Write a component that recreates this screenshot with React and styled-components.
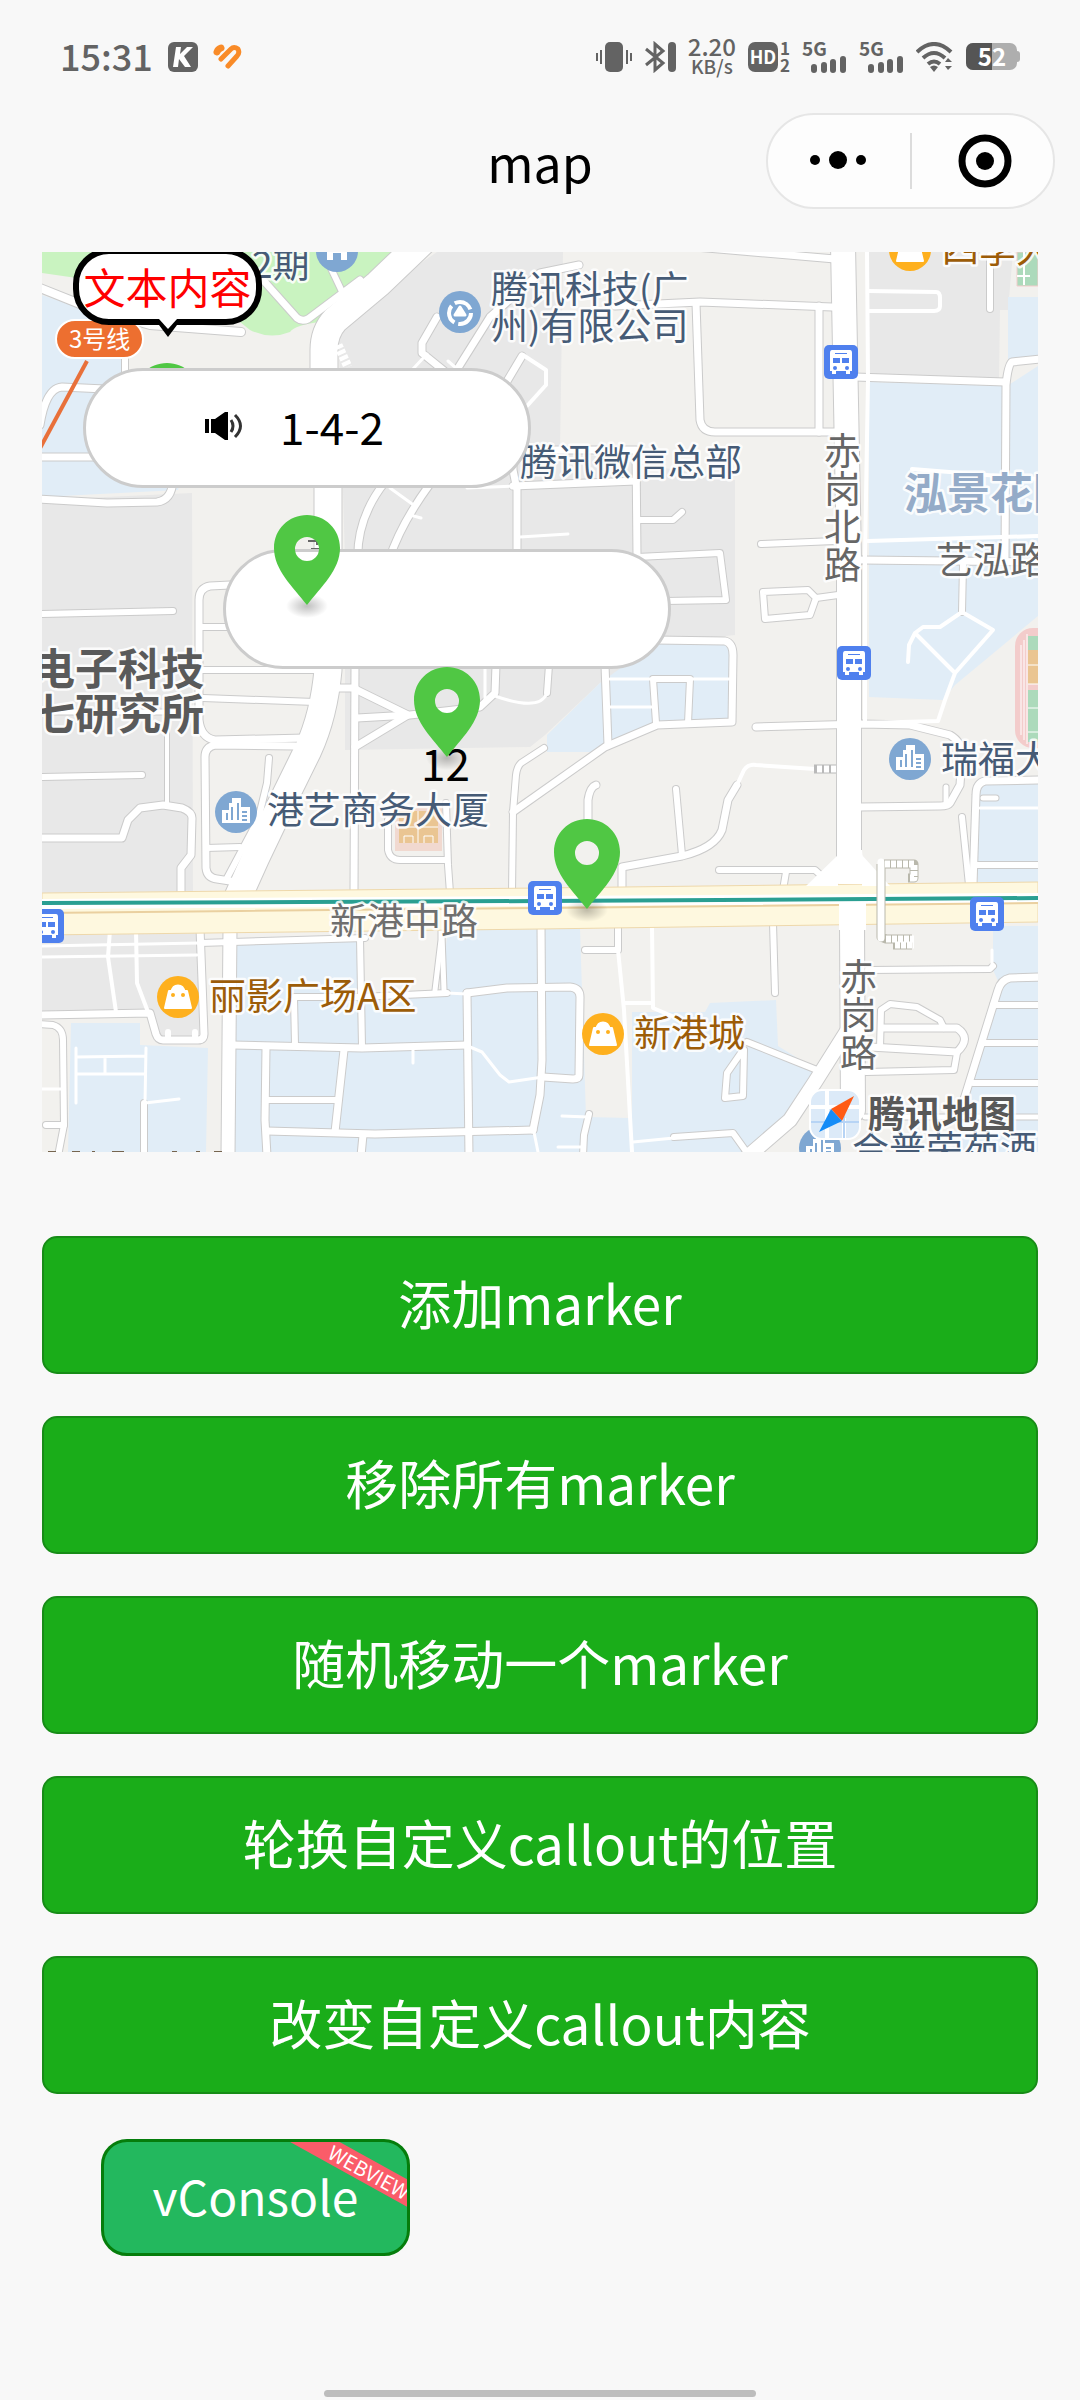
import * as React from 'react';
import styled, { createGlobalStyle } from 'styled-components';

const GlobalStyle = createGlobalStyle`
  * {
    box-sizing: border-box;
  }
  body {
    margin: 0;
    background: #f8f8f8;
    font-family: "Noto Sans CJK SC", "Noto Sans", sans-serif;
  }
  button {
    font-family: inherit;
  }
`;

const LAND = {
  park: '#c9f3c0',
  block: '#e8e8e8',
  estate: '#e1edf7',
};

// filled blocks under the roads
const areas = [
  [LAND.park, 'M42 252H402L330 310L320 322Q295 325 290 332Q270 340 250 330L225 310L160 290L42 273Z'],
  [LAND.block, 'M437 252H563L560 450L735 480V635L660 643L600 683L545 735L530 747L345 750V560L338 320Z'],
  [LAND.block, 'M42 500L192 493L193 895H42Z'],
  [LAND.block, 'M42 933H200L204 1040H156L150 1012H42Z'],
  [LAND.block, 'M868 252H1013L1008 310H1000L999 378H868Z'],
  [LAND.estate, 'M42 295L120 322L127 370L205 400L178 490L42 497Z'],
  [LAND.estate, 'M1008 297H1038V362H1008Z'],
  [LAND.estate, 'M869 382L1007 386L1038 366V616L955 685L943 700L869 697Z'],
  [LAND.estate, 'M655 643H733V722L657 725L600 752H547V735L600 683Z'],
  [LAND.estate, 'M978 783H1038V882H978Z'],
  [LAND.estate, 'M237 942L358 938L362 994L440 990L448 930L580 928L586 1117L630 1118L632 1152H230Z'],
  [LAND.estate, 'M632 1012H705L710 1003L776 1000L778 1046L820 1072L815 1090L790 1125L750 1152H632Z'],
  [LAND.estate, 'M71 1023H140V1045L208 1048L206 1152H68Z'],
  [LAND.estate, 'M993 926H1038V1152H950L1000 985L993 970Z'],
];

// [width, path] of the roads that have an outline
const roads = [
  [8, 'M40 288L90 308L150 325L241 332'],
  [7, 'M263 280L297 318Q302 322 308 319L360 280'],
  [6, 'M328 262L346 300'],
  [6, 'M125 350V385'],
  [7, 'M40 425Q46 388 62 387L105 389'],
  [7, 'M38 457H100'],
  [7, 'M38 499L107 503L157 502Q172 500 173 480'],
  [7, 'M385 482Q355 520 358 565'],
  [7, 'M430 484Q400 525 389 560'],
  [7, 'M579 265L540 273L490 317L458 368'],
  [7, 'M437 317L422 343V353L448 374'],
  [7, 'M522 356L503 388'],
  [7, 'M513 486L636 481'],
  [7, 'M517 555V490L513 470V450H636L637 555'],
  [6, 'M637 520H673L682 512'],
  [6, 'M637 557L720 553L726 600L665 601'],
  [7, 'M615 306L700 302L832 307'],
  [7, 'M696 303L700 420Q702 432 715 432H835'],
  [7, 'M695 247L835 259'],
  [7, 'M819 306V432'],
  [6, 'M990 255V309'],
  [7, 'M855 377L1005 382'],
  [7, 'M1040 359L1012 362Q1008 364 1006 385L1005 560'],
  [6, 'M761 544L835 541'],
  [7, 'M862 560L1040 562'],
  [6, 'M763 592L808 590L816 598L810 615L765 619Z'],
  [6, 'M816 598L838 595'],
  [7, 'M655 640L725 641Q733 643 733 655L732 722L657 725L605 747L513 812'],
  [6, 'M656 723L653 679H690L688 723'],
  [7, 'M605 665L608 745'],
  [7, 'M496 665L495 693L480 707L410 715L357 718'],
  [6, 'M549 665L547 693'],
  [7, 'M355 689L408 715L355 747'],
  [7, 'M355 665L354 893'],
  [7, 'M335 688H355'],
  [6, 'M544 748L521 763Q517 767 516 775L513 812L512 893'],
  [7, 'M596 785Q590 787 588 800V830'],
  [6, 'M676 789L682 855'],
  [7, 'M622 893V867L682 856Q715 848 722 830L728 800L737 785'],
  [6, 'M388 820V850Q390 860 400 860H446'],
  [6, 'M446 803L448 865L450 893'],
  [6, 'M38 614L173 611'],
  [7, 'M230 585L210 586Q199 588 199 600V720Q201 738 215 740L305 738'],
  [6, 'M199 627H232'],
  [6, 'M201 670H315'],
  [6, 'M203 698L315 702'],
  [7, 'M295 746L215 745Q205 747 205 757L206 868Q207 878 217 879L230 881'],
  [6, 'M269 758L267 783L258 820L226 880'],
  [6, 'M206 848L240 847'],
  [4, 'M167 730V804'],
  [5, 'M40 712H198'],
  [6, 'M38 777L142 775'],
  [7, 'M38 838H122L128 820L140 808L163 805L182 808Q192 812 192 818L191 855L181 868V895'],
  [6, 'M200 943L365 938'],
  [7, 'M38 1015L150 1013L156 1034Q158 1040 163 1040H198Q204 1040 204 1034L200 928'],
  [13, 'M230 928L228 1156'],
  [6, 'M38 1024L53 1025Q63 1028 63 1040L64 1125L58 1156'],
  [6, 'M46 1125H64'],
  [6, 'M144 1103V1156'],
  [6, 'M360 938L362 1047'],
  [7, 'M233 1045L362 1048L467 1045'],
  [6, 'M296 997H360L447 993'],
  [6, 'M294 997L295 1045'],
  [7, 'M266 1048L265 1120L267 1156'],
  [6, 'M267 1100H337'],
  [7, 'M344 1050L335 1132'],
  [7, 'M267 1131L375 1134L533 1130'],
  [7, 'M363 1135L361 1156'],
  [5, 'M441 925V940L435 990'],
  [5, 'M442 935L444 990'],
  [7, 'M467 993L507 988L570 987Q580 988 580 997L579 1075Q579 1079 573 1079L543 1077'],
  [7, 'M467 993L469 1156'],
  [7, 'M541 925L542 1060L540 1095L533 1130'],
  [6, 'M585 950H618V925'],
  [6, 'M589 1114L584 1135L583 1156'],
  [6, 'M674 1137L733 1133L748 1154'],
  [14, 'M849 1028L815 1082L790 1120L746 1158'],
  [6, 'M747 1042L817 1070'],
  [6, 'M743 1050L727 1073L725 1098L743 1096L744 1050'],
  [6, 'M773 923L775 993'],
  [6, 'M719 870H815L826 880'],
  [6, 'M786 872L783 890'],
  [6, 'M868 970L990 969L993 966'],
  [6, 'M880 1048L881 1010L890 1004L917 1007L940 1020L944 1028'],
  [7, 'M883 1028H957Q972 1038 957 1052L870 1047'],
  [6, 'M957 1053L954 1070L866 1072'],
  [7, 'M1042 977L1010 978Q1001 980 998 990L960 1112'],
  [6, 'M993 1005H1042'],
  [6, 'M983 1043H1042'],
  [6, 'M973 1083H1042'],
  [5, 'M865 1117H1042'],
  [7, 'M756 727L862 724L910 725L950 735Q962 742 962 755L960 785L950 803Q948 806 940 806L860 807'],
  [5, 'M946 787V805'],
  [6, 'M963 565L962 612'],
  [7, 'M1042 780L985 781Q976 783 976 795L973 885'],
  [6, 'M962 817L969 885'],
  [5, 'M983 798H996'],
  [6, 'M977 865H1042'],
];

const bigRoads = [
  [27, 'M424 240L378 284L335 320Q324 332 324 350V368L328 488V670Q324 715 308 750L276 815L256 857L238 897'],
  [24, 'M843 245L849 560V880L852 925L853 1110'],
];

// footpaths, no outline
const paths = [
  [4, 'M867 250L868 380L865 557V722'],
  [4, 'M868 291L936 292Q940 292 940 298V306Q940 311 934 311H868'],
  [4, 'M523 355L546 370V385L527 406'],
  [3, 'M467 488L513 486M520 537L568 534M390 488L415 506L410 515L421 518M448 361L456 368M427 354L412 370'],
  [4, 'M912 469L1038 479M868 541L1038 536'],
  [3, 'M610 679H733M610 707H653M485 665V700M495 696Q540 712 547 693'],
  [4, 'M737 785L744 770Q748 764 756 765L815 769'],
  [3, 'M42 946L200 943M42 957L197 955'],
  [4, 'M110 930L108 957L116 1012M136 930L137 983L148 1012'],
  [6, 'M168 1032V1040M195 1032V1040'],
  [3, 'M42 1089H62M76 1048V1103M76 1057L145 1056M76 1074H145M105 1057V1074M146 1048L145 1103L179 1099'],
  [3, 'M447 993L467 994M470 1047L482 1052L500 1075L509 1082L543 1077M413 1050V1063M534 1132L538 1152'],
  [4, 'M618 950L624 1010L632 1152M652 926L653 1008L672 1016M625 1003H653'],
  [3, 'M562 1116L588 1117M558 1147H583M633 1142L674 1138'],
  [4, 'M865 723L938 721L945 700L955 673L993 630L962 612L940 627H923L915 633L909 645L908 662M915 633L955 673'],
  [3, 'M980 808H1038M992 950V968'],
];

const labels = [
  { x: 252, y: 278, t: '2期' },
  { x: 491, y: 303, t: '腾讯科技(广' },
  { x: 491, y: 340, t: '州)有限公司' },
  { x: 520, y: 476, t: '腾讯微信总部' },
  { x: 267, y: 824, t: '港艺商务大厦' },
  { x: 941, y: 773, t: '瑞福大' },
  { x: 852, y: 1163, t: '合普荣苑酒' },
  { x: 942, y: 263, t: '四季大', c: '#9c5c08' },
  { x: 209, y: 1010, t: '丽影广场A区', c: '#9c5c08' },
  { x: 634, y: 1047, t: '新港城', c: '#9c5c08' },
  { x: 330, y: 935, t: '新港中路', c: '#6f6f6f' },
  { x: 936, y: 574, t: '艺泓路', c: '#666' },
  { x: 32, y: 685, t: '电子科技', c: '#5a5a5a', s: 43, w: 700 },
  { x: 32, y: 730, t: '七研究所', c: '#5a5a5a', s: 43, w: 700 },
  { x: 904, y: 509, t: '泓景花园', c: '#94abc8', s: 43, w: 700 },
];

const streets = [
  { x: 824, y: 465, step: 38, t: '赤岗北路' },
  { x: 840, y: 991, step: 38, t: '赤岗路' },
];

const stations = [[841, 362], [854, 663], [545, 898], [987, 914], [47, 926]];

const pins = [
  { id: 1, left: 92, top: 111 },
  { id: 2, left: 232, top: 263 },
  { id: 3, left: 372, top: 415 },
  { id: 4, left: 512, top: 567 },
];

const Station = ({ x, y }) => (
  <g transform={`translate(${x - 17} ${y - 17})`}>
    <rect width="34" height="34" rx="5" fill="#4f80ee" />
    <path d="M8 5H26Q28 5 28 8V26H26V29H22V26H12V29H8V26H6V8Q6 5 8 5Z" fill="#fff" />
    <path d="M11 8H23V9H11ZM9 13H16V18H9ZM18 13H25V18H18Z" fill="#4f80ee" />
    <circle cx="11" cy="23" r="2" fill="#4f80ee" />
    <circle cx="23" cy="23" r="2" fill="#4f80ee" />
  </g>
);

const Shop = ({ x, y }) => (
  <g transform={`translate(${x} ${y})`}>
    <circle r="21" fill="#feb01e" />
    <path d="M-9 -6H9L13 11H-13Z" fill="#fff" stroke="#fff" strokeWidth="2" strokeLinejoin="round" />
    <path d="M-6 -5Q-5 -11 0 -11Q5 -11 6 -5" fill="#fff" stroke="#fff" strokeWidth="3" />
    <circle cx="-5" cy="-2" r="2" fill="#feb01e" />
    <circle cx="5" cy="-2" r="2" fill="#feb01e" />
  </g>
);

const Building = ({ x, y }) => (
  <g transform={`translate(${x} ${y})`}>
    <circle r="21" fill="#7fa7d2" />
    <path d="M-14 11V-2H-7V-9H-4V-14H5V-5H14V11Z" fill="#fff" />
    <path d="M-9 1V8M-4 -5V8M2 -9V8M6 0H11M6 4H11M6 8H11" stroke="#7fa7d2" strokeWidth="2" />
  </g>
);

const Halo = ({ x, y, t, c = '#465b76', s = 37, w = 400 }) => (
  <text
    x={x}
    y={y}
    fill={c}
    fontSize={s}
    fontWeight={w}
    stroke="#fff"
    strokeOpacity="0.85"
    strokeWidth="5"
    strokeLinejoin="round"
    paintOrder="stroke">
    {t}
  </text>
);

const CityMap = () => (
  <Canvas viewBox="42 252 996 900" preserveAspectRatio="xMinYMin slice">
    <rect x="42" y="252" width="996" height="900" fill="#f2f1ee" />
    {areas.map(([c, d]) => <path key={d} d={d} fill={c} />)}

    <rect x="395" y="807" width="47" height="44" fill="#f1d9d0" />
    <path d="M399 811H438V843H399Z" fill="#eac592" />
    <path d="M418 811V843M399 827H438M404 843V836H413V843M424 843V836H433V843" fill="none" stroke="#fff" />
    <rect x="1015" y="628" width="60" height="120" rx="18" fill="#f3cccb" />
    <path d="M1028 636H1040V650H1028ZM1028 690H1040V742H1028Z" fill="#acdabb" />
    <path d="M1028 650H1040V684H1028Z" fill="#eac592" />
    <path d="M1021 645V735M1024 640V740M1027 634V744M1028 665H1038M1028 684H1038M1028 708H1038M1028 732H1038" stroke="#fff" />
    <path d="M1017 252H1038V286H1017Z" fill="#acdabb" stroke="#f3cccb" />
    <path d="M1024 252V285M1017 264H1024M1017 276H1030" stroke="#fff" strokeWidth="2" />

    <g fill="none" strokeLinecap="round" strokeLinejoin="round">
      {bigRoads.map(([w, d]) => <path key={d} d={d} stroke="#cbcbcb" strokeWidth={w + 2} />)}
      {roads.map(([w, d]) => <path key={d} d={d} stroke="#cbcbcb" strokeWidth={w + 2} />)}
      {roads.map(([w, d]) => <path key={d} d={d} stroke="#fff" strokeWidth={w} />)}
      {paths.map(([w, d]) => <path key={d} d={d} stroke="#fff" strokeWidth={w} />)}
      {bigRoads.map(([w, d]) => <path key={d} d={d} stroke="#fff" strokeWidth={w} />)}
    </g>
    <path d="M338 345L348 367" stroke="#fff" strokeWidth="9" strokeDasharray="4 2" />
    <path d="M308 541H317V545M311 549H319" fill="none" stroke="#666" strokeWidth="2" />
    <path d="M814 769H836" stroke="#b9b9b9" strokeWidth="9" />
    <path d="M817 769H836" stroke="#fff" strokeWidth="7" strokeDasharray="5 2" />

    {/* main street with the metro line */}
    <path d="M42 893L540 888L1038 882V922L540 929L42 935Z" fill="#fef8df" stroke="#eed8ab" />
    <path d="M42 904L540 901L1038 898" stroke="#fff" strokeWidth="10" />
    <path d="M42 913L240 911L540 908L1038 903" fill="none" stroke="#ead0a0" strokeWidth="2" />
    <path d="M839 884H865L862 850H837ZM839 900H866V930H839Z" fill="#fff" />
    <path d="M862 855L890 886H862ZM838 855L806 886H838Z" fill="#fff" />
    <path d="M42 903L540 901L1038 898" fill="none" stroke="#2a9f92" strokeWidth="4" />
    <g fill="none" strokeLinejoin="round">
      <path d="M884 864H914V878H908" stroke="#b9b8ac" strokeWidth="9" />
      <path d="M881 864V937L886 939H912M893 945H912" stroke="#b9b8ac" strokeWidth="9" />
      <path d="M881 862V938" stroke="#fff" strokeWidth="7" strokeLinecap="round" />
      <path d="M885 864H914V878H909M886 939H914M895 945H914" stroke="#fff" strokeWidth="7" strokeDasharray="5 1" />
    </g>

    <path d="M87 361L38 452" stroke="#e8703a" strokeWidth="4" />
    <rect x="56" y="320" width="87" height="38" rx="19" fill="#ed6f30" stroke="#fff" strokeWidth="2" />
    <text x="69" y="348" fontSize="24" fill="#fff">3号线</text>

    {stations.map(([x, y]) => <Station key={x} x={x} y={y} />)}
    <Shop x={910} y={250} />
    <Shop x={178} y={997} />
    <Shop x={603} y={1034} />
    <Building x={236} y={812} />
    <Building x={910} y={759} />
    <Building x={820} y={1148} />
    <circle cx="337" cy="251" r="21" fill="#7fa7d2" />
    <path d="M327 246H347V260H341V253H333V260H327Z" fill="#fff" />
    <circle cx="460" cy="312" r="21" fill="#7fa7d2" />
    <circle cx="460" cy="313" r="11" fill="none" stroke="#fff" strokeWidth="4" strokeDasharray="19 4" />
    <path d="M460 307L465 315H455Z" fill="#fff" stroke="#fff" strokeWidth="3" strokeLinejoin="round" />

    {labels.map((l) => <Halo key={l.t} {...l} />)}
    {streets.map(({ x, y, step, t }) =>
      [...t].map((ch, i) => <Halo key={t + ch} x={x} y={y + i * step} t={ch} c="#666" />)
    )}
    <path d="M48 1152H56M72 1152H80M92 1152H95M112 1152H124M172 1152H177M196 1152H200M214 1152H222" stroke="#76654f" strokeWidth="2" />

    {/* map brand */}
    <rect x="810" y="1090" width="50" height="49" rx="12" fill="#dceaf8" stroke="#fff" strokeWidth="2" />
    <path d="M827 1091V1138M811 1107H859M844 1118V1138" stroke="#fff" strokeWidth="4" />
    <path d="M811 1122H859M844 1106V1138" stroke="#b7d4f5" strokeWidth="2" />
    <path d="M854 1096L831 1109L842 1121Z" fill="#ff5a14" />
    <path d="M819 1132L831 1109L842 1121Z" fill="#158cf7" />
    <Halo x={868} y={1128} t="腾讯地图" c="#585858" w={700} />
  </Canvas>
);

const Pin = ({ left, top, id }) => (
  <PinIcon $left={left} $top={top} viewBox="0 0 66 104" role="img" aria-label={`marker ${id}`}>
    <defs>
      <radialGradient id={`shade${id}`}>
        <stop offset="0" stopColor="#000" stopOpacity="0.25" />
        <stop offset="1" stopColor="#000" stopOpacity="0" />
      </radialGradient>
    </defs>
    <ellipse cx="33" cy="91" rx="21" ry="12" fill={`url(#shade${id})`} />
    <path
      fillRule="evenodd"
      fill="#50c744"
      d="M33 0C51 0 66 14 66 33C66 55 47 72 33 90C19 72 0 55 0 33C0 14 15 0 33 0ZM33 22A12 12 0 1 0 33 46A12 12 0 1 0 33 22Z"
    />
  </PinIcon>
);

const Signal = () => (
  <SignalBox>
    <svg width="45" height="32" viewBox="0 0 45 32">
      <path d="M12 26V29M22 24V29M31 21V29M41 18V29" stroke="#636363" strokeWidth="6" strokeLinecap="round" />
    </svg>
    <NetType>5G</NetType>
  </SignalBox>
);

const StatusBar = () => (
  <Status>
    <Group $gap={15}>
      <Clock>15:31</Clock>
      <svg width="30" height="30" viewBox="0 0 30 30">
        <rect width="30" height="30" rx="6" fill="#636363" />
        <path d="M8 5H13L12 12L19 5H25L16 14L23 25H17L11 17L10 25H5Z" fill="#fff" />
      </svg>
      <svg width="29" height="26" viewBox="0 0 29 26">
        <g fill="none" stroke="#f98b28" strokeLinecap="round" strokeLinejoin="round">
          <path d="M4 8Q5 5 8 4" strokeWidth="7" />
          <path d="M8 15L18 5Q21 2 25 5Q27 9 24 12L15 22" strokeWidth="5" />
        </g>
      </svg>
    </Group>
    <Group $gap={12}>
      <svg width="36" height="32" viewBox="0 0 36 32">
        <rect x="9" y="1" width="18" height="30" rx="5" fill="#636363" />
        <path d="M1 12V20M5 9V23M31 9V23M35 12V20" stroke="#636363" strokeWidth="2" />
      </svg>
      <svg width="32" height="32" viewBox="0 0 32 32">
        <path d="M2 8L19 22L11 29V3L19 10L2 24" fill="none" stroke="#636363" strokeWidth="3" />
        <rect x="24" y="1" width="8" height="30" rx="4" fill="#636363" />
      </svg>
      <Speed>
        <SpeedValue>2.20</SpeedValue>
        <span>KB/s</span>
      </Speed>
      <Group $gap={2}>
        <HD>HD</HD>
        <Sims>
          <span>1</span>
          <span>2</span>
        </Sims>
      </Group>
      <Signal />
      <Signal />
      <svg width="38" height="30" viewBox="0 0 38 30">
        <path d="M1 10Q18 -6 35 10M7 16Q18 6 29 16M12 22Q18 17 24 22" fill="none" stroke="#636363" strokeWidth="4" />
        <path d="M14 25Q18 22 22 25L18 30ZM29 20L32 16L36 20ZM29 24H36L32 28Z" fill="#636363" />
      </svg>
      <Battery>
        <BatteryLevel>5</BatteryLevel>
        <span>2</span>
      </Battery>
    </Group>
  </Status>
);

const actions = [
  '添加marker',
  '移除所有marker',
  '随机移动一个marker',
  '轮换自定义callout的位置',
  '改变自定义callout内容',
];

export default function App() {
  return (
    <Page>
      <GlobalStyle />
      <StatusBar />
      <NavBar>
        <Title>map</Title>
        <Capsule>
          <CapsuleButton aria-label="more">
            <svg width="60" height="56" viewBox="0 0 60 56">
              <circle cx="6" cy="27" r="5" />
              <circle cx="29" cy="27" r="9" />
              <circle cx="52" cy="27" r="5" />
            </svg>
          </CapsuleButton>
          <Divider />
          <CapsuleButton aria-label="close">
            <svg width="60" height="56" viewBox="0 0 60 56">
              <circle cx="33" cy="28" r="23" fill="none" stroke="#000" strokeWidth="7" />
              <circle cx="33" cy="28" r="9" />
            </svg>
          </CapsuleButton>
        </Capsule>
      </NavBar>
      <Content>
        <MapBox>
          <CityMap />
          <Pin {...pins[0]} />
          <TextCallout>
            文本内容
            <Arrow viewBox="0 0 26 20">
              <path d="M0 0V6H4L13 18L22 6H26V0Z" />
              <path d="M4 0L13 10L22 0Z" fill="#fff" />
            </Arrow>
          </TextCallout>
          <Callout $left={41} $top={116}>
            <svg width="40" height="30" viewBox="0 0 40 30">
              <path d="M1 8H5V22H1ZM7 8H11L21 1H24V29H21L11 22H7Z" />
              <path d="M27 9Q31 15 27 21M31 4Q42 15 31 26" fill="none" stroke="#333" strokeWidth="3" />
            </svg>
            <span>1-4-2</span>
          </Callout>
          <Callout $left={181} $top={297} />
          <MarkerLabel>12</MarkerLabel>
          {pins.slice(1).map((p) => <Pin key={p.id} {...p} />)}
        </MapBox>
        <Actions>
          {actions.map((a) => <ActionButton key={a}>{a}</ActionButton>)}
        </Actions>
        <ConsoleButton>
          vConsole
          <Ribbon>WEBVIEW</Ribbon>
        </ConsoleButton>
      </Content>
      <HomeBar />
    </Page>
  );
}

const Page = styled.div`
  min-height: 100vh;
  display: flex;
  flex-direction: column;
  background: #f8f8f8;
`;

const Status = styled.header`
  height: 113px;
  padding: 0 60px;
  display: flex;
  align-items: center;
  justify-content: space-between;
  color: #636363;
`;

const Group = styled.div`
  display: flex;
  align-items: center;
  gap: ${(p) => p.$gap}px;
`;

const Clock = styled.span`
  padding-bottom: 4px;
  font-size: 36px;
  line-height: 40px;
  font-weight: 500;
`;

const Speed = styled.div`
  display: flex;
  flex-direction: column;
  align-items: center;
  padding-bottom: 2px;
  font-size: 19px;
  line-height: 20px;
  font-weight: 500;
`;

const SpeedValue = styled.span`
  font-size: 24px;
`;

const HD = styled.span`
  width: 30px;
  height: 30px;
  border-radius: 7px;
  background: #636363;
  color: #fff;
  font-size: 18px;
  line-height: 28px;
  font-weight: 700;
  text-align: center;
`;

const Sims = styled.span`
  display: flex;
  flex-direction: column;
  padding-bottom: 2px;
  font-size: 17px;
  line-height: 17px;
  font-weight: 700;
`;

const SignalBox = styled.span`
  position: relative;
  display: flex;
`;

const NetType = styled.span`
  position: absolute;
  left: 0;
  top: -2px;
  font-size: 19px;
  line-height: 18px;
  font-weight: 700;
`;

const Battery = styled.span`
  position: relative;
  display: flex;
  width: 51px;
  height: 27px;
  margin-right: 3px;
  border-radius: 7px;
  background: #aeaeae;
  color: #fff;
  font-size: 24px;
  line-height: 26px;
  font-weight: 700;

  &::after {
    content: '';
    position: absolute;
    right: -3px;
    top: 8px;
    width: 3px;
    height: 11px;
    border-radius: 0 3px 3px 0;
    background: #aeaeae;
  }
`;

const BatteryLevel = styled.span`
  width: 26px;
  border-radius: 7px 0 0 7px;
  background: #555;
  text-align: right;
`;

const NavBar = styled.nav`
  display: grid;
  grid-template-columns: 1fr auto 1fr;
  align-items: center;
  padding: 0 25px;
`;

const Title = styled.h1`
  grid-column: 2;
  margin: 0;
  font-size: 50px;
  line-height: 96px;
  font-weight: 400;
`;

const Capsule = styled.div`
  justify-self: end;
  display: flex;
  align-items: center;
  width: 289px;
  height: 96px;
  border: 2px solid #e6e6e6;
  border-radius: 48px;
  background: #fdfdfd;
`;

const CapsuleButton = styled.button`
  flex: 1;
  display: flex;
  justify-content: center;
  padding: 0;
  border: none;
  background: none;
`;

const Divider = styled.span`
  width: 2px;
  height: 56px;
  background: #dcdcdc;
`;

const Content = styled.main`
  display: flex;
  flex-direction: column;
  padding: 43px 42px 0;
`;

const MapBox = styled.section`
  position: relative;
  height: 900px;
  overflow: hidden;
`;

const Canvas = styled.svg`
  display: block;
  width: 100%;
  height: 100%;
`;

const PinIcon = styled.svg`
  position: absolute;
  left: ${(p) => p.$left}px;
  top: ${(p) => p.$top}px;
  width: 66px;
  height: 104px;
`;

const Callout = styled.div`
  position: absolute;
  left: ${(p) => p.$left}px;
  top: ${(p) => p.$top}px;
  width: 448px;
  height: 120px;
  padding: 0 26px 4px 0;
  display: flex;
  align-items: center;
  justify-content: center;
  gap: 36px;
  border: 3px solid #ccc;
  border-radius: 60px;
  background: #fff;
  font-size: 44px;
  line-height: 60px;
`;

const TextCallout = styled.div`
  position: absolute;
  left: 31px;
  top: -4px;
  width: 189px;
  height: 77px;
  border: 6px solid #000;
  border-radius: 36px;
  background: #fff;
  color: #f00;
  font-size: 42px;
  line-height: 64px;
  white-space: nowrap;
  display: flex;
  justify-content: center;
`;

const Arrow = styled.svg`
  position: absolute;
  left: 76px;
  top: 65px;
  width: 26px;
  height: 20px;
`;

const MarkerLabel = styled.span`
  position: absolute;
  left: 379px;
  top: 480px;
  font-size: 44px;
  line-height: 60px;
`;

const Actions = styled.div`
  margin-top: 84px;
  display: flex;
  flex-direction: column;
  gap: 42px;
`;

const ActionButton = styled.button`
  height: 138px;
  padding: 0 0 6px;
  border: 2px solid #178c17;
  border-radius: 15px;
  background: #1aad19;
  color: #fff;
  font-size: 53px;
  line-height: 80px;
`;

const ConsoleButton = styled.button`
  position: relative;
  align-self: flex-start;
  width: 309px;
  height: 117px;
  margin: 45px 0 0 59px;
  padding: 0 0 6px;
  border: 3px solid #067d0c;
  border-radius: 26px;
  background: #23b85e;
  color: #fff;
  font-size: 48px;
  line-height: 60px;
  overflow: hidden;
`;

const Ribbon = styled.span`
  position: absolute;
  right: -62px;
  top: 18px;
  width: 200px;
  background: #fa5c69;
  font-size: 20px;
  line-height: 24px;
  transform: rotate(29deg);
`;

const HomeBar = styled.div`
  width: 40%;
  height: 7px;
  margin: auto auto 3px;
  border-radius: 4px;
  background: #bdbdbd;
`;
